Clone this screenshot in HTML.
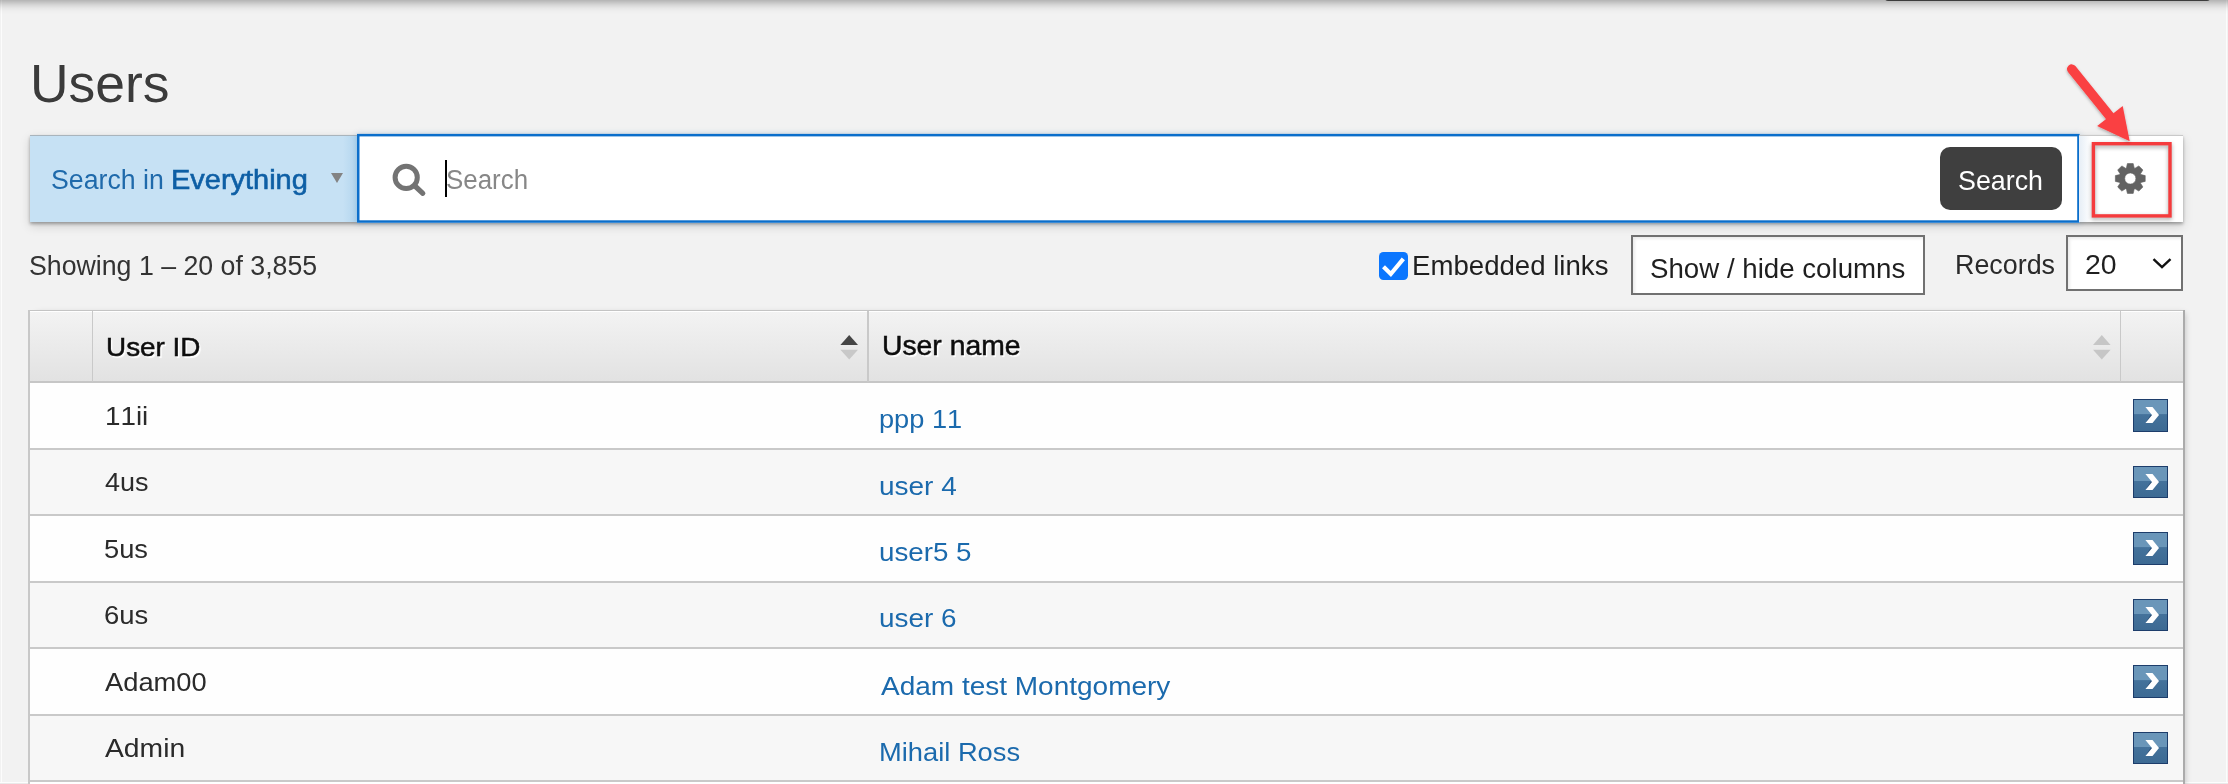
<!DOCTYPE html>
<html><head><meta charset="utf-8"><title>Users</title><style>
html,body{margin:0;padding:0}
body{width:2228px;height:784px;overflow:hidden;position:relative;background:#f2f2f2;font-family:"Liberation Sans",sans-serif}
.t{position:absolute;white-space:nowrap;line-height:1;transform-origin:0 0;font-kerning:none}
.ab{position:absolute;left:2133.3px;width:35px;height:32.7px;box-sizing:border-box;border:1px solid #1d3d6b;background:linear-gradient(#6a96b9 0,#6a96b9 45%,#44729b 47%,#3d6a93 100%)}
.ch{position:absolute;left:11px;top:7px;width:14px;height:17px}
</style></head><body>
<div style="position:absolute;left:1.2px;top:0;width:1px;height:784px;background:#fcfcfc"></div>
<div style="position:absolute;left:2226px;top:0;width:1.2px;height:784px;background:#fcfcfc"></div>
<div style="position:absolute;left:0;top:0;width:2228px;height:15px;background:linear-gradient(rgba(0,0,0,0.26) 0px,rgba(0,0,0,0.2) 2px,rgba(0,0,0,0.115) 5px,rgba(0,0,0,0.05) 8px,rgba(0,0,0,0.017) 11px,rgba(0,0,0,0) 15px)"></div>
<div style="position:absolute;left:1885px;top:-3px;width:325px;height:3.9px;background:#3d3d3d;border-radius:0 0 3px 3px;filter:blur(0.6px)"></div>
<div class="t" style="left:29.68px;top:57.32px;font-size:54.36px;color:#3b3b3b;transform:scaleX(0.9831);text-shadow:0 0 2px #fff;">Users</div>
<div style="position:absolute;left:29.5px;top:135px;width:2153.5px;height:87px;box-shadow:0 2px 3px rgba(0,0,0,0.3),0 4px 10px rgba(0,0,0,0.15)"></div>
<div style="position:absolute;left:29.5px;top:135px;width:328px;height:87px;background:#c6e1f4;border-top:1px solid #a9b4bc;box-sizing:border-box"></div>
<div style="position:absolute;left:343px;top:136px;width:14px;height:86px;background:linear-gradient(90deg,rgba(180,214,238,0),#b2d5ee)"></div>
<div class="t" style="left:51.39px;top:165.69px;font-size:27.62px;color:#1f6aab;transform:scaleX(0.9672);">Search in</div>
<div class="t" style="left:171.12px;top:165.69px;font-size:27.62px;color:#0e5fa5;transform:scaleX(1.0488);-webkit-text-stroke:0.6px #0e5fa5;">Everything</div>
<div style="position:absolute;left:331px;top:172.7px;width:0;height:0;border-left:6.5px solid transparent;border-right:6.5px solid transparent;border-top:10.5px solid #838383"></div>
<div style="position:absolute;left:357px;top:133.9px;width:1722.7px;height:88.9px;background:#fff;box-shadow:0 0 6px rgba(40,110,180,0.25)"></div>
<svg style="position:absolute;left:350px;top:128px" width="1740" height="100" viewBox="350 128 1740 100"><rect x="358.25" y="135.15" width="1720.2" height="86.4" fill="none" stroke="#0a6ecb" stroke-width="2.5"/></svg>
<svg style="position:absolute;left:385px;top:156px" width="48" height="48" viewBox="385 156 48 48"><circle cx="406.2" cy="177.4" r="11.1" fill="none" stroke="#737373" stroke-width="5"/><line x1="415.5" y1="186.5" x2="422.8" y2="193.3" stroke="#737373" stroke-width="5.2" stroke-linecap="round"/></svg>
<div style="position:absolute;left:445.3px;top:160.3px;width:2.2px;height:36.4px;background:#000"></div>
<div class="t" style="left:446.12px;top:165.91px;font-size:27.18px;color:#878787;transform:scaleX(0.9528);">Search</div>
<div style="position:absolute;left:1940px;top:147.4px;width:121.7px;height:62.6px;background:#3f3f3f;border-radius:10px"></div>
<div class="t" style="left:1957.78px;top:165.96px;font-size:28.49px;color:#ffffff;transform:scaleX(0.9412);">Search</div>
<div style="position:absolute;left:2079.4px;top:135px;width:103.6px;height:87px;background:linear-gradient(90deg,#e6eef6,#fff 12px);border-top:1px solid #c9c9c9;box-sizing:border-box"></div>
<svg style="position:absolute;left:2100px;top:148px" width="60" height="60" viewBox="2100 148 60 60"><path d="M2126.40 167.89 L2127.40 163.58 L2133.20 163.58 L2134.20 167.89 A11.30 11.30 0 0 1 2135.04 168.24 L2135.04 168.24 L2138.80 165.90 L2142.90 170.00 L2140.56 173.76 A11.30 11.30 0 0 1 2140.91 174.60 L2140.91 174.60 L2145.22 175.60 L2145.22 181.40 L2140.91 182.40 A11.30 11.30 0 0 1 2140.56 183.24 L2140.56 183.24 L2142.90 187.00 L2138.80 191.10 L2135.04 188.76 A11.30 11.30 0 0 1 2134.20 189.11 L2134.20 189.11 L2133.20 193.42 L2127.40 193.42 L2126.40 189.11 A11.30 11.30 0 0 1 2125.56 188.76 L2125.56 188.76 L2121.80 191.10 L2117.70 187.00 L2120.04 183.24 A11.30 11.30 0 0 1 2119.69 182.40 L2119.69 182.40 L2115.38 181.40 L2115.38 175.60 L2119.69 174.60 A11.30 11.30 0 0 1 2120.04 173.76 L2120.04 173.76 L2117.70 170.00 L2121.80 165.90 L2125.56 168.24 A11.30 11.30 0 0 1 2126.40 167.89 Z M2135.90 178.50 A5.6 5.6 0 1 0 2124.70 178.50 A5.6 5.6 0 1 0 2135.90 178.50 Z" fill="#626262" fill-rule="evenodd" stroke="#626262" stroke-width="0.6" stroke-linejoin="round"/></svg>
<div class="t" style="left:29.19px;top:250.63px;font-size:28.34px;color:#333333;transform:scaleX(0.9431);">Showing 1 – 20 of 3,855</div>
<div style="position:absolute;left:1379.1px;top:251.9px;width:28.5px;height:28px;background:#0b76fe;border-radius:4.5px"></div>
<svg style="position:absolute;left:1379px;top:252px" width="29" height="28" viewBox="0 0 29 28"><path d="M6 16.3 L11.8 22 L23 8.5" fill="none" stroke="#fff" stroke-width="4.2" stroke-linecap="square" stroke-linejoin="miter"/></svg>
<div class="t" style="left:1412.03px;top:252.35px;font-size:27.91px;color:#1f1f1f;transform:scaleX(0.9894);">Embedded links</div>
<div style="position:absolute;left:1631.2px;top:235.3px;width:294px;height:60.1px;background:#fff;border:2px solid #717171;box-sizing:border-box;box-shadow:inset 2px 2px 3px rgba(0,0,0,0.08)"></div>
<div class="t" style="left:1650.04px;top:254.57px;font-size:28.05px;color:#1f1f1f;transform:scaleX(0.9865);">Show / hide columns</div>
<div class="t" style="left:1955.30px;top:249.80px;font-size:28.20px;color:#2a2a2a;transform:scaleX(0.9531);">Records</div>
<div style="position:absolute;left:2066.4px;top:235.2px;width:116.2px;height:55.5px;background:#fff;border:2px solid #717171;box-sizing:border-box;box-shadow:inset 2px 2px 3px rgba(0,0,0,0.08)"></div>
<div class="t" style="left:2085.27px;top:252.06px;font-size:26.89px;color:#1f1f1f;transform:scaleX(1.0579);">20</div>
<svg style="position:absolute;left:2150px;top:254px" width="24" height="18" viewBox="2150 254 24 18"><path d="M2153.5 259.2 L2162 267.2 L2170.5 259.2" fill="none" stroke="#111" stroke-width="2.4"/></svg>
<div style="position:absolute;left:0;top:782px;width:2228px;height:1px;background:#fdfdfd"></div><div style="position:absolute;left:0;top:783px;width:2228px;height:1px;background:#e9e9e9"></div>
<div style="position:absolute;left:28.0px;top:310px;width:2155.0px;height:480px;box-shadow:5px 0 6px -3px rgba(0,0,0,0.22)"></div>
<div style="position:absolute;left:28.0px;top:310px;width:2155.0px;height:73px;background:linear-gradient(#f3f3f3,#e2e2e2);border-top:1px solid #c4c4c4;border-bottom:2px solid #c6c6c6;box-sizing:border-box"></div>
<div style="position:absolute;left:28.0px;top:311px;width:2155.0px;height:1px;background:#fff"></div>
<div style="position:absolute;left:91.5px;top:311px;width:1.6px;height:71px;background:#c9c9c9"></div>
<div style="position:absolute;left:867.3px;top:311px;width:1.6px;height:71px;background:#c9c9c9"></div>
<div style="position:absolute;left:2119.6px;top:311px;width:1.6px;height:71px;background:#c9c9c9"></div>
<div class="t" style="left:105.85px;top:333.80px;font-size:26.60px;color:#0d0d0d;transform:scaleX(1.0481);-webkit-text-stroke:0.5px #0d0d0d;text-shadow:1.5px 1.5px 1px #fff;">User ID</div>
<div class="t" style="left:882.11px;top:333.46px;font-size:26.89px;color:#0d0d0d;transform:scaleX(1.0535);-webkit-text-stroke:0.5px #0d0d0d;text-shadow:1.5px 1.5px 1px #fff;">User name</div>
<svg style="position:absolute;left:836px;top:330px" width="30" height="34" viewBox="836 330 30 34"><path d="M840.40 344.9 L849.20 335 L858.00 344.9 Z" fill="#454545"/><path d="M840.40 349.8 L849.20 359.5 L858.00 349.8 Z" fill="#c8c8c8"/></svg>
<svg style="position:absolute;left:2089px;top:330px" width="30" height="34" viewBox="2089 330 30 34"><path d="M2093.00 344.9 L2101.80 335 L2110.60 344.9 Z" fill="#c6c6c6"/><path d="M2093.00 349.8 L2101.80 359.5 L2110.60 349.8 Z" fill="#c6c6c6"/></svg>
<div style="position:absolute;left:29.6px;top:383.30px;width:2153.4px;height:64.50px;background:#fefefe"></div>
<div style="position:absolute;left:28.0px;top:447.70px;width:2155.0px;height:2.2px;background:#c9c9c9"></div>
<div class="t" style="left:104.58px;top:403.00px;font-size:26.60px;color:#2b2b2b;transform:scaleX(1.0456);">11ii</div>
<div class="t" style="left:879.25px;top:406.40px;font-size:26.60px;color:#1b6aad;transform:scaleX(1.0224);">ppp 11</div>
<div class="ab" style="top:399.00px"><svg width="35" height="33" viewBox="0 0 35 33" style="position:absolute;left:-1px;top:-1px"><path d="M12.4 8 L19.5 8 L26 16.1 L19.5 24.1 L12.4 24.1 L19 16.1 Z" fill="#fff"/><path d="M12.4 24.1 L19 16.1 L17.5 16.1 Z" fill="rgba(0,20,60,0.35)"/></svg></div>
<div style="position:absolute;left:29.6px;top:449.80px;width:2153.4px;height:64.50px;background:#f7f7f7"></div>
<div style="position:absolute;left:28.0px;top:514.20px;width:2155.0px;height:2.2px;background:#c9c9c9"></div>
<div class="t" style="left:104.58px;top:469.10px;font-size:26.60px;color:#2b2b2b;transform:scaleX(1.0142);">4us</div>
<div class="t" style="left:879.18px;top:472.60px;font-size:26.60px;color:#1b6aad;transform:scaleX(1.0515);">user 4</div>
<div class="ab" style="top:465.50px"><svg width="35" height="33" viewBox="0 0 35 33" style="position:absolute;left:-1px;top:-1px"><path d="M12.4 8 L19.5 8 L26 16.1 L19.5 24.1 L12.4 24.1 L19 16.1 Z" fill="#fff"/><path d="M12.4 24.1 L19 16.1 L17.5 16.1 Z" fill="rgba(0,20,60,0.35)"/></svg></div>
<div style="position:absolute;left:29.6px;top:516.30px;width:2153.4px;height:64.50px;background:#fefefe"></div>
<div style="position:absolute;left:28.0px;top:580.70px;width:2155.0px;height:2.2px;background:#c9c9c9"></div>
<div class="t" style="left:104.11px;top:535.80px;font-size:26.60px;color:#2b2b2b;transform:scaleX(1.0255);">5us</div>
<div class="t" style="left:879.20px;top:538.70px;font-size:26.60px;color:#1b6aad;transform:scaleX(1.0434);">user5 5</div>
<div class="ab" style="top:532.00px"><svg width="35" height="33" viewBox="0 0 35 33" style="position:absolute;left:-1px;top:-1px"><path d="M12.4 8 L19.5 8 L26 16.1 L19.5 24.1 L12.4 24.1 L19 16.1 Z" fill="#fff"/><path d="M12.4 24.1 L19 16.1 L17.5 16.1 Z" fill="rgba(0,20,60,0.35)"/></svg></div>
<div style="position:absolute;left:29.6px;top:582.80px;width:2153.4px;height:64.50px;background:#f7f7f7"></div>
<div style="position:absolute;left:28.0px;top:647.20px;width:2155.0px;height:2.2px;background:#c9c9c9"></div>
<div class="t" style="left:103.81px;top:602.00px;font-size:26.60px;color:#2b2b2b;transform:scaleX(1.0327);">6us</div>
<div class="t" style="left:879.19px;top:604.70px;font-size:26.60px;color:#1b6aad;transform:scaleX(1.0474);">user 6</div>
<div class="ab" style="top:598.50px"><svg width="35" height="33" viewBox="0 0 35 33" style="position:absolute;left:-1px;top:-1px"><path d="M12.4 8 L19.5 8 L26 16.1 L19.5 24.1 L12.4 24.1 L19 16.1 Z" fill="#fff"/><path d="M12.4 24.1 L19 16.1 L17.5 16.1 Z" fill="rgba(0,20,60,0.35)"/></svg></div>
<div style="position:absolute;left:29.6px;top:649.30px;width:2153.4px;height:64.50px;background:#fefefe"></div>
<div style="position:absolute;left:28.0px;top:713.70px;width:2155.0px;height:2.2px;background:#c9c9c9"></div>
<div class="t" style="left:105.15px;top:669.20px;font-size:26.60px;color:#2b2b2b;transform:scaleX(1.0267);">Adam00</div>
<div class="t" style="left:880.95px;top:672.70px;font-size:26.60px;color:#1b6aad;transform:scaleX(1.0525);">Adam test Montgomery</div>
<div class="ab" style="top:665.00px"><svg width="35" height="33" viewBox="0 0 35 33" style="position:absolute;left:-1px;top:-1px"><path d="M12.4 8 L19.5 8 L26 16.1 L19.5 24.1 L12.4 24.1 L19 16.1 Z" fill="#fff"/><path d="M12.4 24.1 L19 16.1 L17.5 16.1 Z" fill="rgba(0,20,60,0.35)"/></svg></div>
<div style="position:absolute;left:29.6px;top:715.80px;width:2153.4px;height:64.50px;background:#f7f7f7"></div>
<div style="position:absolute;left:28.0px;top:780.20px;width:2155.0px;height:2.2px;background:#c9c9c9"></div>
<div class="t" style="left:105.14px;top:735.30px;font-size:26.60px;color:#2b2b2b;transform:scaleX(1.0636);">Admin</div>
<div class="t" style="left:878.76px;top:738.50px;font-size:26.60px;color:#1b6aad;transform:scaleX(1.0266);">Mihail Ross</div>
<div class="ab" style="top:731.50px"><svg width="35" height="33" viewBox="0 0 35 33" style="position:absolute;left:-1px;top:-1px"><path d="M12.4 8 L19.5 8 L26 16.1 L19.5 24.1 L12.4 24.1 L19 16.1 Z" fill="#fff"/><path d="M12.4 24.1 L19 16.1 L17.5 16.1 Z" fill="rgba(0,20,60,0.35)"/></svg></div>
<div style="position:absolute;left:29.6px;top:782.40px;width:2153.4px;height:10px;background:#fff"></div>
<div style="position:absolute;left:28.0px;top:310px;width:1.8px;height:480px;background:#c8c8c8"></div>
<div style="position:absolute;left:2183.0px;top:310px;width:1.5px;height:480px;background:#ababab"></div>
<svg style="position:absolute;left:2080px;top:132px;overflow:visible" width="104" height="96" viewBox="2080 132 104 96"><rect x="2093.4" y="143.7" width="76.6" height="72.2" fill="none" stroke="#f53b3d" stroke-width="3.4" style="filter:drop-shadow(0 2px 2px rgba(0,0,0,0.35))"/></svg>
<svg style="position:absolute;left:2050px;top:50px;overflow:visible" width="100" height="100" viewBox="2050 50 100 100"><defs><filter id="sh" x="-20%" y="-20%" width="140%" height="140%"><feDropShadow dx="0" dy="1.5" stdDeviation="1.5" flood-color="#000" flood-opacity="0.3"/></filter></defs><g filter="url(#sh)" fill="#fa4043"><line x1="2071.7" y1="69.1" x2="2110" y2="116.5" stroke="#fa4043" stroke-width="9.5" stroke-linecap="round"/><path d="M2097.2 125.9 L2122.7 106.1 L2129.7 141.2 Z"/></g></svg>
</body></html>
